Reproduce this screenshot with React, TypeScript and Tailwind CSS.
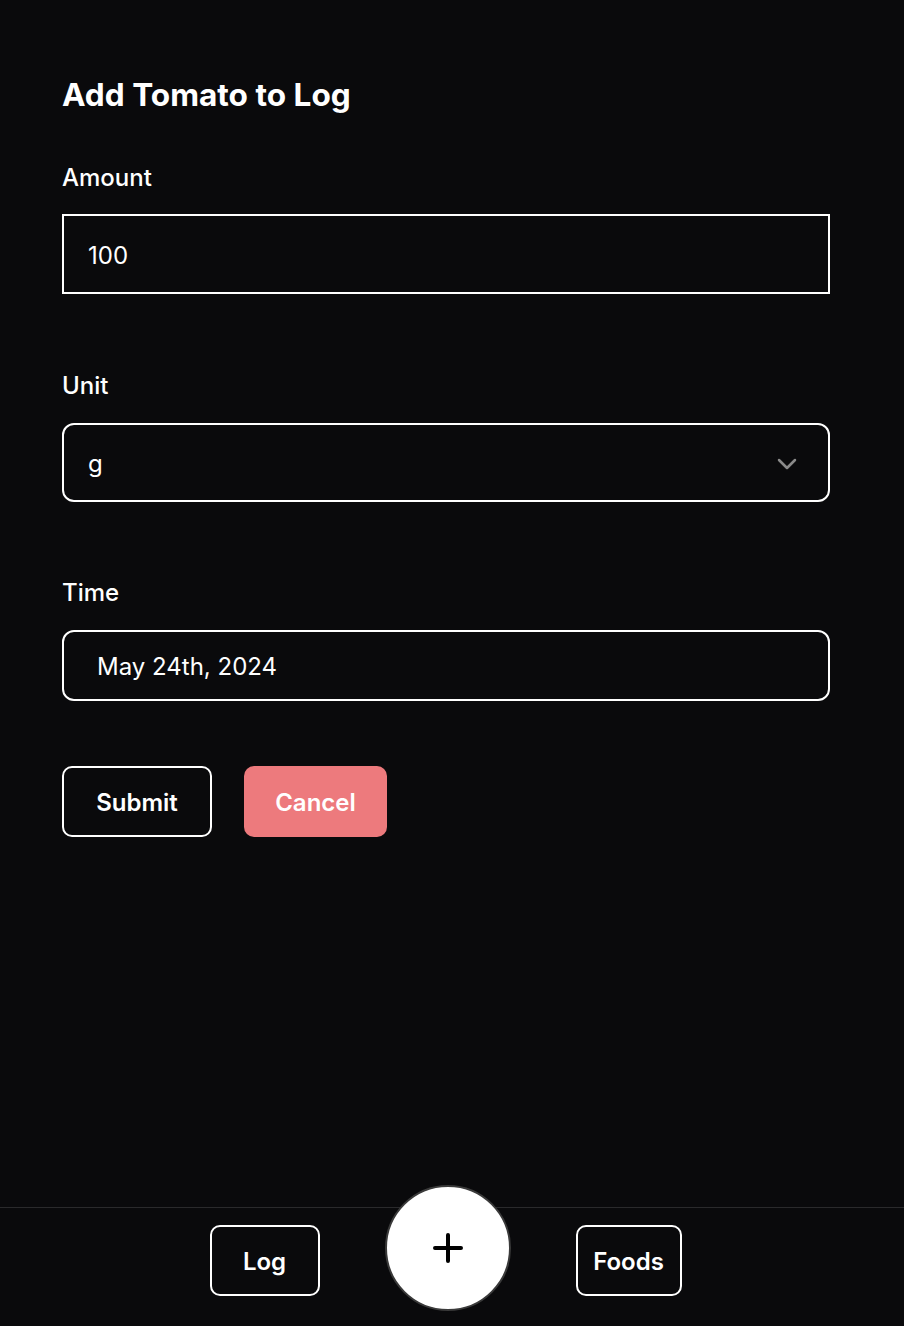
function Label({ children }: { children: string }) {
    return <label className="block text-2xl font-medium leading-8 text-white">{children}</label>;
}

export default function App() {
    return (
        <div
            className="flex h-screen flex-col bg-[#0a0a0c] text-white"
            style={{ fontFamily: "Inter, 'Noto Sans', sans-serif" }}
        >
            <main className="flex-1 px-[62px] pt-[77px]">
                <div className="w-[768px]">
                    <h1 className="text-[31.6px] font-bold leading-9">Add Tomato to Log</h1>

                    <div className="mt-[49px]">
                        <Label>Amount</Label>
                        <div className="mt-[20px] flex h-[80px] items-center border-2 border-white px-6 pt-[3px]">
                            <span className="text-2xl">100</span>
                        </div>
                    </div>

                    <div className="mt-[76px]">
                        <Label>Unit</Label>
                        <div className="mt-[21px] flex h-[79px] items-center justify-between rounded-xl border-2 border-white pl-6 pr-[31px] pt-[3px]">
                            <span className="text-2xl">g</span>
                            <svg width="20" height="12" viewBox="0 0 20 12" fill="none" stroke="#8a8a8a" strokeWidth="2.5" strokeLinecap="round" strokeLinejoin="round">
                                <path d="M2 2l8 8 8-8" />
                            </svg>
                        </div>
                    </div>

                    <div className="mt-[75px]">
                        <Label>Time</Label>
                        <div className="mt-[21px] flex h-[71px] items-center rounded-xl border-2 border-white px-[33px] pt-[3px]">
                            <span className="text-2xl">May 24th, 2024</span>
                        </div>
                    </div>

                    <div className="mt-[65px] flex gap-8">
                        <button className="h-[71px] w-[150px] rounded-[10px] border-2 border-white pt-[3px] text-2xl font-semibold">
                            Submit
                        </button>
                        <button className="h-[71px] w-[143px] rounded-[10px] bg-[#ed7a7d] pt-[3px] text-2xl font-semibold">
                            Cancel
                        </button>
                    </div>
                </div>
            </main>

            <nav className="flex h-[119px] items-start justify-center gap-[65px] border-t border-[#2a2a2c] pr-[13px] pt-[17px]">
                <button className="h-[71px] w-[110px] rounded-[10px] border-2 border-white pt-[3px] text-2xl font-semibold">
                    Log
                </button>
                <button className="-mt-[40px] flex h-[126px] w-[126px] items-center justify-center rounded-full border-2 border-[#3a3a3a] bg-white">
                    <svg width="32" height="32" viewBox="0 0 32 32" fill="none" stroke="#000" strokeWidth="4" strokeLinecap="round">
                        <path d="M16 3v26M3 16h26" />
                    </svg>
                </button>
                <button className="h-[71px] w-[106px] rounded-[10px] border-2 border-white pt-[3px] text-2xl font-semibold">
                    Foods
                </button>
            </nav>
        </div>
    );
}
